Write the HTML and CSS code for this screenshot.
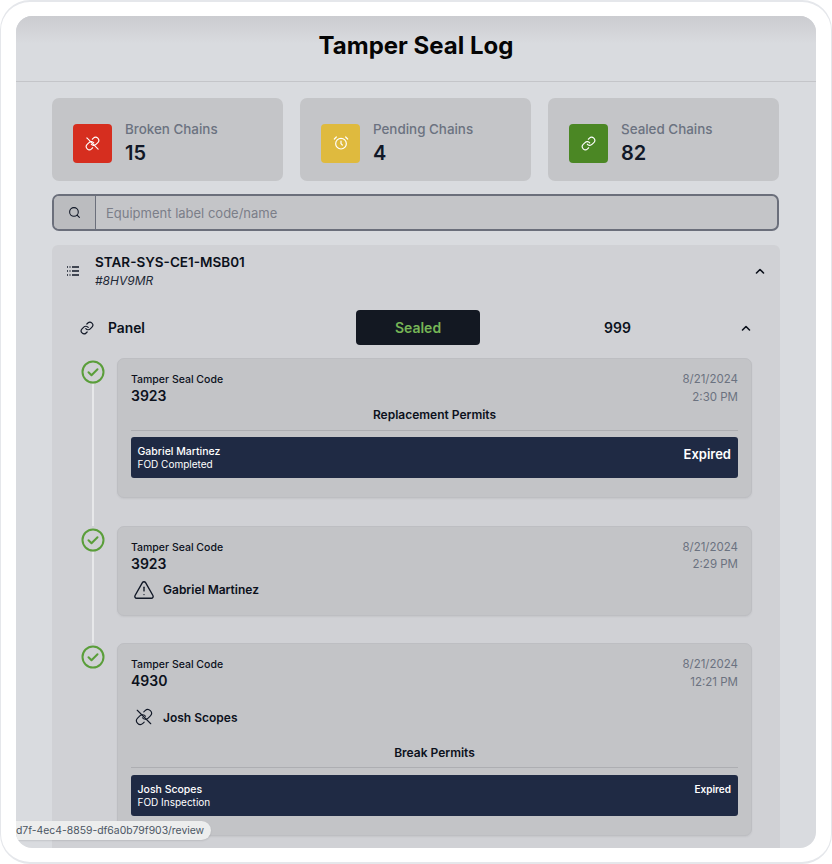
FILE: index.html
```html
<!DOCTYPE html>
<html>
<head>
    <meta charset="UTF-8">
    <title>Tamper Seal Log</title>
    <link rel="stylesheet" href="styles.css">
</head>
<body>
<div class="frame">
    <div class="screen">
        <header class="page-header">
            <h1>Tamper Seal Log</h1>
        </header>

        <main class="content">
            <section class="stats">
                <div class="stat">
                    <div class="stat-icon red">
                        <svg width="15" height="15" viewBox="0 0 24 24"><path d="M10 13a5 5 0 0 0 7.54.54l3-3a5 5 0 0 0-7.07-7.07l-1.72 1.71"/><path d="M14 11a5 5 0 0 0-7.54-.54l-3 3a5 5 0 0 0 7.07 7.07l1.71-1.71"/><path d="M3 3l18 18"/></svg>
                    </div>
                    <div>
                        <div class="stat-label">Broken Chains</div>
                        <div class="stat-value">15</div>
                    </div>
                </div>
                <div class="stat">
                    <div class="stat-icon yellow">
                        <svg width="16" height="16" viewBox="0 0 24 24"><circle cx="12" cy="13" r="8"/><path d="M12 9v4l2 2"/><path d="M5 3L2 6"/><path d="M22 6l-3-3"/></svg>
                    </div>
                    <div>
                        <div class="stat-label">Pending Chains</div>
                        <div class="stat-value">4</div>
                    </div>
                </div>
                <div class="stat">
                    <div class="stat-icon green">
                        <svg width="15" height="15" viewBox="0 0 24 24"><path d="M10 13a5 5 0 0 0 7.54.54l3-3a5 5 0 0 0-7.07-7.07l-1.72 1.71"/><path d="M14 11a5 5 0 0 0-7.54-.54l-3 3a5 5 0 0 0 7.07 7.07l1.71-1.71"/></svg>
                    </div>
                    <div>
                        <div class="stat-label">Sealed Chains</div>
                        <div class="stat-value">82</div>
                    </div>
                </div>
            </section>

            <div class="search">
                <span class="search-icon">
                    <svg width="13" height="13" viewBox="0 0 24 24"><circle cx="11" cy="11" r="8"/><path d="M21 21l-4.3-4.3"/></svg>
                </span>
                <input type="text" placeholder="Equipment label code/name">
            </div>

            <section class="equipment">
                <div class="equipment-head">
                    <svg class="list-icon" width="16" height="16" viewBox="0 0 16 16"><path d="M2 4h1M4.5 4h1M7 4h7M2 8h1M4.5 8h1M7 8h7M2 12h1M4.5 12h1M7 12h7"/></svg>
                    <div class="equipment-name">
                        <div class="equipment-title">STAR-SYS-CE1-MSB01</div>
                        <div class="equipment-code">#8HV9MR</div>
                    </div>
                    <svg class="chevron" width="16" height="16" viewBox="0 0 16 16"><path d="M4.5 10L8 6.5l3.5 3.5"/></svg>
                </div>

                <div class="chain-row">
                    <div class="chain-name">
                        <svg class="line-icon chain-icon" width="14" height="14" viewBox="0 0 24 24"><path d="M10 13a5 5 0 0 0 7.54.54l3-3a5 5 0 0 0-7.07-7.07l-1.72 1.71"/><path d="M14 11a5 5 0 0 0-7.54-.54l-3 3a5 5 0 0 0 7.07 7.07l1.71-1.71"/></svg>
                        Panel
                    </div>
                    <div class="chain-status">Sealed</div>
                    <div class="chain-count">999</div>
                    <svg class="chevron" width="16" height="16" viewBox="0 0 16 16"><path d="M4.5 10L8 6.5l3.5 3.5"/></svg>
                </div>

                <div class="timeline">
                    <div class="event">
                        <div class="marker">
                            <svg class="check" width="24" height="24" viewBox="0 0 24 24"><circle cx="12" cy="12" r="10.5"/><path d="M7.5 12.2l3 3 6-6"/></svg>
                            <div class="marker-line"></div>
                        </div>
                        <div class="card">
                            <div class="card-top">
                                <div>
                                    <div class="seal-label">Tamper Seal Code</div>
                                    <div class="seal-code">3923</div>
                                </div>
                                <div class="card-date">8/21/2024<br>2:30 PM</div>
                            </div>
                            <div class="permits-title">Replacement Permits</div>
                            <div class="permit">
                                <div>
                                    <div class="permit-name">Gabriel Martinez</div>
                                    <div class="permit-type">FOD Completed</div>
                                </div>
                                <div class="permit-state large">Expired</div>
                            </div>
                        </div>
                    </div>

                    <div class="event">
                        <div class="marker">
                            <svg class="check" width="24" height="24" viewBox="0 0 24 24"><circle cx="12" cy="12" r="10.5"/><path d="M7.5 12.2l3 3 6-6"/></svg>
                            <div class="marker-line"></div>
                        </div>
                        <div class="card card-short">
                            <div class="card-top">
                                <div>
                                    <div class="seal-label">Tamper Seal Code</div>
                                    <div class="seal-code">3923</div>
                                </div>
                                <div class="card-date">8/21/2024<br>2:29 PM</div>
                            </div>
                            <div class="person">
                                <svg class="line-icon person-icon" width="22" height="22" viewBox="0 0 24 24"><path d="M21.73 18l-8-14a2 2 0 0 0-3.48 0l-8 14A2 2 0 0 0 4 21h16a2 2 0 0 0 1.73-3"/><path d="M12 9v4"/><path d="M12 17h.01"/></svg>
                                Gabriel Martinez
                            </div>
                        </div>
                    </div>

                    <div class="event">
                        <div class="marker">
                            <svg class="check" width="24" height="24" viewBox="0 0 24 24"><circle cx="12" cy="12" r="10.5"/><path d="M7.5 12.2l3 3 6-6"/></svg>
                        </div>
                        <div class="card">
                            <div class="card-top">
                                <div>
                                    <div class="seal-label">Tamper Seal Code</div>
                                    <div class="seal-code">4930</div>
                                </div>
                                <div class="card-date">8/21/2024<br>12:21 PM</div>
                            </div>
                            <div class="person person-broken">
                                <svg class="line-icon person-icon broken-icon" width="18" height="18" viewBox="0 0 24 24"><path d="M10 13a5 5 0 0 0 7.54.54l3-3a5 5 0 0 0-7.07-7.07l-1.72 1.71"/><path d="M14 11a5 5 0 0 0-7.54-.54l-3 3a5 5 0 0 0 7.07 7.07l1.71-1.71"/><path d="M3 3l18 18"/></svg>
                                Josh Scopes
                            </div>
                            <div class="permits-title spaced">Break Permits</div>
                            <div class="permit">
                                <div>
                                    <div class="permit-name">Josh Scopes</div>
                                    <div class="permit-type">FOD Inspection</div>
                                </div>
                                <div class="permit-state">Expired</div>
                            </div>
                        </div>
                    </div>
                </div>
            </section>
        </main>

        <!-- browser link preview -->
        <div class="link-preview">d7f-4ec4-8859-df6a0b79f903/review</div>
    </div>
</div>
</body>
</html>
```

FILE: styles.css
```css
* { box-sizing: border-box; }
body { margin: 0; background: #fff; font-family: Inter, "Liberation Sans", sans-serif; color: #111827; }
svg { display: block; flex-shrink: 0; fill: none; stroke-linecap: round; stroke-linejoin: round; }

.frame { width: 832px; height: 864px; padding: 14px 15px; background: #fff; border: solid #e5e7eb; border-width: 2px 1px; border-radius: 30px; }
.screen { position: relative; height: 832px; overflow: hidden; background: #d9dbdf; border-radius: 16px; }

.page-header { height: 66px; border-bottom: 1px solid #c4c5c9; background: linear-gradient(#cbccd0, #d9dbdf 28px); }
.page-header h1 { margin: 0; font-size: 24px; line-height: 60px; font-weight: 700; text-align: center; color: #050505; }

.content { padding: 16px 36px 0; }

.stats { display: grid; grid-template-columns: repeat(3, 1fr); gap: 17px; width: 727px; margin-bottom: 13px; }
.stat { display: flex; align-items: center; gap: 13px; height: 83px; padding: 21px 21px 14px; background: #c4c5c8; border-radius: 7px; }
.stat-icon { display: flex; align-items: center; justify-content: center; width: 39px; height: 39px; border-radius: 4px; }
.stat-icon svg { stroke: #fff; stroke-width: 1.8; }
.red { background: #d62e1f; }
.yellow { background: #dfba3e; }
.green { background: #4b8724; }
.stat-label { font-size: 13.4px; line-height: 20px; font-weight: 500; color: #6b7280; }
.stat-value { font-size: 20px; line-height: 28px; font-weight: 600; color: #111827; }

.search { display: flex; width: 727px; height: 37px; margin-bottom: 14px; background: #c4c5c8; border: 2px solid #6b6f7b; border-radius: 7px; overflow: hidden; }
.search-icon { display: flex; align-items: center; justify-content: center; width: 42px; background: #bbbcbf; border-right: 1px solid #6b6f7b; }
.search-icon svg { stroke: #111827; stroke-width: 2; }
.search input { flex: 1; padding: 0 10px; border: 0; outline: 0; background: transparent; font: 400 13px Inter, sans-serif; }
.search input::placeholder { color: #7b7e88; opacity: 1; }

.equipment { padding: 7px 0 0; background: #d0d1d5; border-radius: 6px 6px 0 0; }
.equipment-head { display: flex; align-items: center; padding: 0 12px 0 13px; }
.list-icon { stroke: #111827; stroke-width: 1.4; stroke-linecap: butt; margin-right: 14px; }
.equipment-name { flex: 1; }
.equipment-title { font-size: 13.5px; line-height: 20px; font-weight: 600; color: #0c111c; }
.equipment-code { font-size: 12px; line-height: 17px; font-style: italic; color: #1f2937; }
.chevron { stroke: #0c111c; stroke-width: 1.6; }

.chain-row { display: grid; grid-template-columns: 277px 124px 1fr 16px; align-items: center; height: 35px; margin: 21px 26px 13px 27px; }
.chain-name { display: flex; align-items: center; gap: 14px; font-size: 13.8px; font-weight: 600; color: #0c111c; }
.chain-icon { margin-left: 1px; }
.line-icon { stroke: #111827; stroke-width: 2; }
.chain-status { height: 35px; line-height: 35px; text-align: center; font-size: 14px; font-weight: 600; color: #76b556; background: #131822; border-radius: 4px; }
.chain-count { padding-left: 17px; text-align: center; font-size: 14px; font-weight: 600; color: #0c111c; }

.timeline { padding: 0 28px 0 29px; }
.event { display: flex; gap: 12px; padding-bottom: 27.5px; }
.marker { display: flex; flex-direction: column; align-items: center; width: 24px; padding-top: 2px; margin-bottom: -27.5px; }
.check { stroke: #5a9e3a; stroke-width: 2; }
.marker-line { flex: 1; width: 2px; background: #e7e8ea; }

.card { flex: 1; padding: 13px 13px 19px; background: #c3c4c7; border: 1px solid #bdbec2; border-radius: 7px; box-shadow: 0 1px 2px rgba(0, 0, 0, 0.06); }
.card-short { padding-bottom: 15px; }
.card-top { display: flex; justify-content: space-between; }
.seal-label { font-size: 10.5px; line-height: 15px; font-weight: 500; color: #0c111c; }
.seal-code { margin-bottom: 2px; font-size: 14px; line-height: 18px; font-weight: 600; color: #0c111c; }
.card-date { margin-top: -1px; font-size: 11.5px; line-height: 17.5px; text-align: right; color: #6b7280; }

.permits-title { padding-bottom: 7px; margin-bottom: 6px; border-bottom: 1px solid #adaeb2; font-size: 12px; line-height: 16px; font-weight: 600; text-align: center; color: #0c111c; }
.permits-title.spaced { margin-top: 18px; margin-bottom: 7px; padding-bottom: 6px; }
.permit { display: flex; justify-content: space-between; height: 41px; padding: 8px 7px 0 6.5px; background: #1f2a44; border-radius: 3px; color: #fff; }
.permit-name { font-size: 10.5px; line-height: 13px; font-weight: 500; }
.permit-type { font-size: 10px; line-height: 13px; }
.permit-state { font-size: 10px; line-height: 12px; font-weight: 600; }
.permit-state.large { font-size: 13px; line-height: 18px; }

.person { display: flex; align-items: center; gap: 8px; height: 20px; margin-top: 5px; padding-left: 2px; font-size: 12px; font-weight: 600; color: #0c111c; }
.person-broken { margin-top: 15px; }
.person-icon { stroke-width: 1.5; }
.broken-icon { margin: 0 2px; }

.link-preview { position: absolute; left: 0; bottom: 8px; height: 19px; padding-right: 7px; font-size: 10.4px; line-height: 19px; color: #4b5563; background: #eceded; border-radius: 0 10px 10px 0; box-shadow: 0 1px 2px rgba(0, 0, 0, 0.1); white-space: nowrap; }
```
